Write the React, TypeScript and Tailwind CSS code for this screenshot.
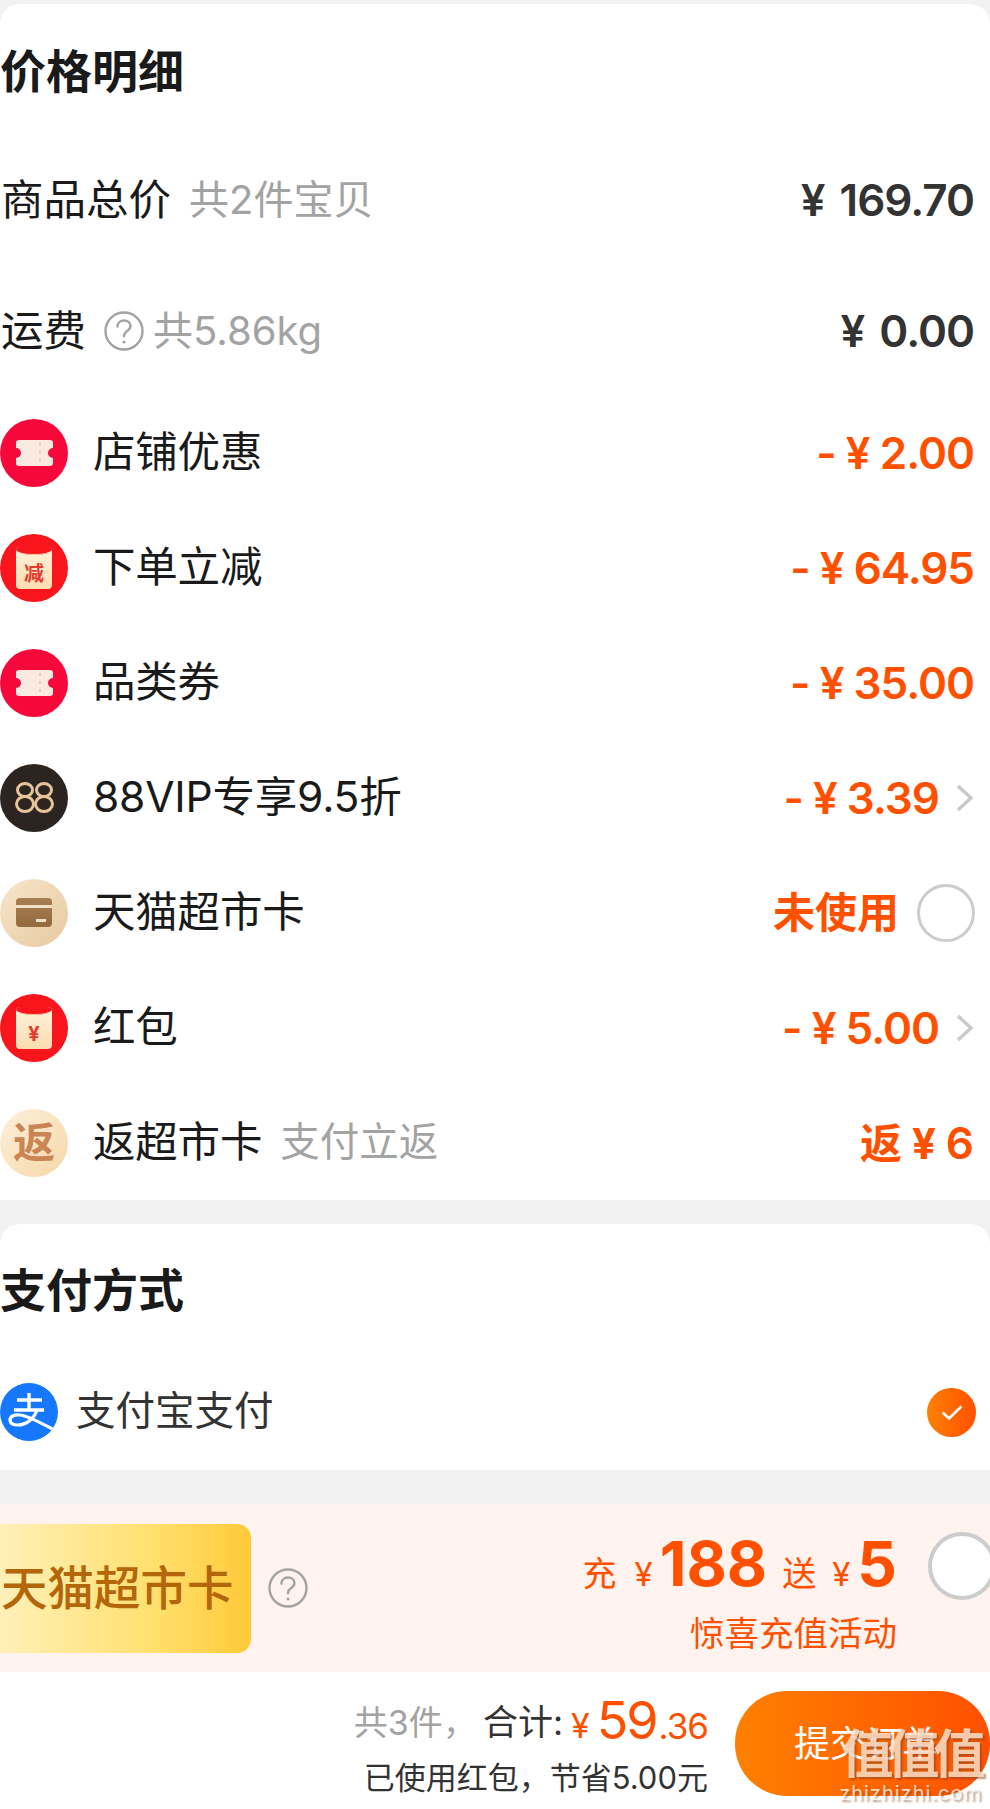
import type { ReactNode } from "react";

const orange = "text-[#ff5000]";

function Ticket() {
  return (
    <svg viewBox="0 0 68 68" className="size-[68px]">
      <circle cx="34" cy="34" r="34" fill="#f7083a" />
      <path d="M19 21h31a3 3 0 0 1 3 3v5a5 5 0 0 0 0 10v5a3 3 0 0 1-3 3H19a3 3 0 0 1-3-3v-5a5 5 0 0 0 0-10v-5a3 3 0 0 1 3-3z" fill="#f9e9df" />
      <path d="M40 24v22" stroke="#e8cfc0" strokeWidth="2" strokeDasharray="3 5" />
    </svg>
  );
}

function RedPacket({ label, size }: { label: string; size: string }) {
  return (
    <div className="relative flex size-[68px] items-center justify-center rounded-full bg-[#f8151b]">
      <div className="relative flex h-[42px] w-[36px] items-end justify-center overflow-hidden rounded-[4px] bg-[linear-gradient(180deg,#fff3dc,#fbdcb0)] pb-[5px]">
        <div className="absolute top-[-14px] left-[-4px] h-[22px] w-[44px] rounded-b-[50%] bg-[#f8151b]" />
        <div className="absolute top-0 left-0 h-[8px] w-full rounded-b-[50%] border-b border-[#f9c9a0]" />
        <span className={`${size} leading-none font-bold text-[#e8382c]`}>{label}</span>
      </div>
    </div>
  );
}

function Vip() {
  return (
    <div className="flex size-[68px] items-center justify-center rounded-full bg-[#2b2420]">
      <svg viewBox="0 0 68 68" className="size-[68px]" fill="none" stroke="#e6c49a" strokeWidth="3">
        <ellipse cx="25" cy="26" rx="7.5" ry="6.5" />
        <ellipse cx="25" cy="40" rx="8.5" ry="7.5" />
        <ellipse cx="44" cy="26" rx="7.5" ry="6.5" />
        <ellipse cx="44" cy="40" rx="8.5" ry="7.5" />
      </svg>
    </div>
  );
}

function CardIcon() {
  return (
    <div className="flex size-[68px] items-center justify-center rounded-full bg-[linear-gradient(135deg,#f8e6cb,#e6c9a0)]">
      <div className="relative h-[29px] w-[36px] rounded-[4px] bg-[linear-gradient(180deg,#a87f55,#94693f)]">
        <div className="mt-[7px] h-[3px] w-full bg-[#f3dfc3]" />
        <div className="absolute right-[6px] bottom-[5px] h-[3px] w-[10px] bg-[#f3dfc3]" />
      </div>
    </div>
  );
}

function ReturnIcon() {
  return (
    <div className="flex size-[68px] items-center justify-center rounded-full bg-[linear-gradient(135deg,#fdf0dc,#f6d7a8)]">
      <span className="text-[42px] leading-none font-bold text-[#c98654]">返</span>
    </div>
  );
}

function Help({ className }: { className?: string }) {
  return (
    <svg viewBox="0 0 40 40" className={`size-[40px] shrink-0 ${className ?? ""}`} fill="none" stroke="#a3a3a3" strokeWidth="2.4">
      <circle cx="20" cy="20" r="18.5" />
      <path d="M13.500 15.500c0-3.800 3-6 6.500-6s6.500 2.200 6.500 5.600c0 2.600-1.700 3.900-3.600 5.200-1.900 1.300-2.900 2.400-2.900 5" strokeLinecap="round" />
      <circle cx="20" cy="31" r="1.600" fill="#a3a3a3" stroke="none" />
    </svg>
  );
}

function Chevron() {
  return (
    <svg viewBox="0 0 18 28" className="h-[28px] w-[18px]" fill="none" stroke="#c9c9c9" strokeWidth="3.4">
      <path d="M2 2l13 12L2 26" />
    </svg>
  );
}

function Alipay() {
  return (
    <svg viewBox="0 0 58 58" className="size-[58px] shrink-0">
      <clipPath id="alipay-disc">
        <circle cx="29" cy="29" r="29" />
      </clipPath>
      <circle cx="29" cy="29" r="29" fill="#1677ff" />
      <g clipPath="url(#alipay-disc)" fill="none" stroke="#fff">
        <path d="M17 17h25M29 10v17M14 27h30" strokeWidth="3.400" />
        <path d="M37 27c-3 9-11 15-19 15-5 0-8-2-8-5s4-6 10-5c10 1 24 10 40 18" strokeWidth="3.200" />
      </g>
    </svg>
  );
}

function Amount({ children }: { children: ReactNode }) {
  return <span className={`text-[44px] leading-none font-semibold tracking-[-1px] whitespace-pre ${orange}`}>{children}</span>;
}

function Row({ icon, label, note, right }: { icon: ReactNode; label: string; note?: string; right: ReactNode }) {
  return (
    <div className="flex h-[115px] items-center justify-between pr-[16px]">
      <div className="flex items-center gap-[25px]">
        {icon}
        <div className="flex items-center gap-[18px]">
          <span className="text-[42.5px] leading-none tracking-[-0.2px] text-[#1a1a1a]">{label}</span>
          {note && <span className="text-[39.5px] leading-none text-[#a3a3a3]">{note}</span>}
        </div>
      </div>
      {right}
    </div>
  );
}

export default function App() {
  return (
    <div className="relative h-[1809px] w-[990px] overflow-hidden bg-[#f2f2f2] font-[Inter,'Noto_Sans_CJK_SC',sans-serif]">
      <div className="h-[4px]" />
      <section className="h-[1196px] rounded-t-[20px] bg-white">
        <h2 className="pt-[41px] text-[46px] leading-[52px] font-bold text-[#1a1a1a]">价格明细</h2>
        <div className="mt-[77px] flex h-[52px] items-center justify-between pr-[16px] pl-[1px]">
          <div className="flex items-center gap-[18px]">
            <span className="text-[42.5px] leading-none text-[#1a1a1a]">商品总价</span>
            <span className="text-[40px] leading-none text-[#a3a3a3]">共2件宝贝</span>
          </div>
          <span className="text-[44px] leading-none font-semibold tracking-[-1px] [word-spacing:5px] whitespace-pre text-[#333]">¥ 169.70</span>
        </div>
        <div className="mt-[79px] flex h-[52px] items-center justify-between pr-[16px] pl-[1px]">
          <div className="flex items-center">
            <span className="text-[42.5px] leading-none text-[#1a1a1a]">运费</span>
            <Help className="ml-[18px]" />
            <span className="ml-[9px] text-[40px] leading-none text-[#a3a3a3]">共5.86kg</span>
          </div>
          <span className="text-[44px] leading-none font-semibold tracking-[-1px] [word-spacing:5px] whitespace-pre text-[#333]">¥ 0.00</span>
        </div>
        <div className="mt-[38px]">
          <Row icon={<Ticket />} label="店铺优惠" right={<Amount>- ¥ 2.00</Amount>} />
          <Row icon={<RedPacket label="减" size="text-[20px]" />} label="下单立减" right={<Amount>- ¥ 64.95</Amount>} />
          <Row icon={<Ticket />} label="品类券" right={<Amount>- ¥ 35.00</Amount>} />
          <Row
            icon={<Vip />}
            label="88VIP专享9.5折"
            right={
              <div className="flex items-center gap-[17px]">
                <Amount>- ¥ 3.39</Amount>
                <Chevron />
              </div>
            }
          />
          <Row
            icon={<CardIcon />}
            label="天猫超市卡"
            right={
              <div className="mr-[-1px] flex items-center gap-[18px]">
                <span className={`text-[42px] leading-none font-bold ${orange}`}>未使用</span>
                <div className="size-[58px] rounded-full border-[3px] border-[#cccccc]" />
              </div>
            }
          />
          <Row
            icon={<RedPacket label="¥" size="text-[20px]" />}
            label="红包"
            right={
              <div className="flex items-center gap-[17px]">
                <Amount>- ¥ 5.00</Amount>
                <Chevron />
              </div>
            }
          />
          <Row
            icon={<ReturnIcon />}
            label="返超市卡"
            note="支付立返"
            right={
              <span className={`text-[42px] leading-none font-bold whitespace-pre ${orange}`}>
                返 ¥ <span className="text-[44px] font-semibold">6</span>
              </span>
            }
          />
        </div>
      </section>

      <section className="mt-[24px] h-[246px] rounded-t-[20px] bg-white">
        <h2 className="pt-[40px] text-[46px] leading-[52px] font-bold text-[#1a1a1a]">支付方式</h2>
        <div className="mt-[67px] flex items-center justify-between pr-[14px]">
          <div className="flex items-center gap-[18px]">
            <Alipay />
            <span className="text-[39.5px] leading-none text-[#333]">支付宝支付</span>
          </div>
          <div className="flex size-[49px] items-center justify-center rounded-full bg-[linear-gradient(90deg,#ff8000,#ff5000)]">
            <svg viewBox="0 0 26 20" className="h-[17px] w-[24px]" fill="none" stroke="#fff" strokeWidth="3.200">
              <path d="M2 10l7.500 7L24 3" />
            </svg>
          </div>
        </div>
      </section>

      <section className="mt-[34px] flex h-[168px] items-center justify-between overflow-hidden bg-[#fff3ef]">
        <div className="flex items-center">
          <div className="flex h-[129px] w-[251px] items-center rounded-r-[14px] bg-[linear-gradient(90deg,#fff0b8,#ffe070_60%,#ffc938)] pl-[1px]">
            <span className="text-[46.5px] leading-none font-medium whitespace-nowrap text-[#b4660a]">天猫超市卡</span>
          </div>
          <Help className="ml-[17px]" />
        </div>
        <div className="mr-[-6px] flex items-center gap-[31px]">
          <div className="mt-[6px] flex flex-col items-end">
            <div className={`flex items-baseline whitespace-pre ${orange}`}>
              <span className="text-[34px]">充</span>
              <span className="ml-[18px] text-[33px]">¥</span>
              <span className="ml-[7px] text-[62px] leading-[72px] font-bold">188</span>
              <span className="ml-[15px] text-[34px]">送</span>
              <span className="ml-[16px] text-[33px]">¥</span>
              <span className="ml-[7px] text-[62px] leading-[72px] font-bold">5</span>
            </div>
            <span className={`mt-[14px] text-[34.5px] leading-[40px] ${orange}`}>惊喜充值活动</span>
          </div>
          <div className="mb-[44px] size-[68px] shrink-0 rounded-full border-[4px] border-[#cccccc] bg-white" />
        </div>
      </section>

      <footer className="flex h-[137px] items-start justify-end bg-white pt-[19px]">
        <div className="mr-[27px] flex flex-col items-end">
          <div className="mt-[-13px] flex h-[77px] items-baseline whitespace-pre">
            <span className="text-[34px] text-[#a3a3a3]">共3件，</span>
            <span className="ml-[6px] text-[35px] text-[#333]">合计:</span>
            <span className={`ml-[8px] translate-y-[3px] text-[34px] ${orange}`}>¥</span>
            <span className={`ml-[7px] translate-y-[4px] text-[52px] tracking-[-2px] ${orange}`}>59</span>
            <span className={`ml-[2px] translate-y-[4px] text-[35px] tracking-[-1px] ${orange}`}>.36</span>
          </div>
          <span className="mt-[3px] text-[31px] leading-[40px] whitespace-nowrap text-[#333]">已使用红包，节省5.00元</span>
        </div>
        <div className="flex h-[105px] w-[255px] shrink-0 items-center rounded-[52px] bg-[linear-gradient(90deg,#ff8000,#ff5000)] pl-[59px]">
          <span className="text-[36px] leading-none whitespace-nowrap text-white">提交订单</span>
        </div>
      </footer>

      {/* site watermark over the button */}
      <div className="absolute right-[8px] bottom-[4px] flex flex-col items-center text-[#ffe0c8]/85 [text-shadow:2px_2px_2px_rgba(120,70,40,0.55)]">
        <span className="text-[52px] leading-[52px] font-bold tracking-[-6px]">值值值</span>
        <span className="text-[20px] leading-[24px] tracking-[1px] text-white/75">zhizhizhi.com</span>
      </div>
    </div>
  );
}
